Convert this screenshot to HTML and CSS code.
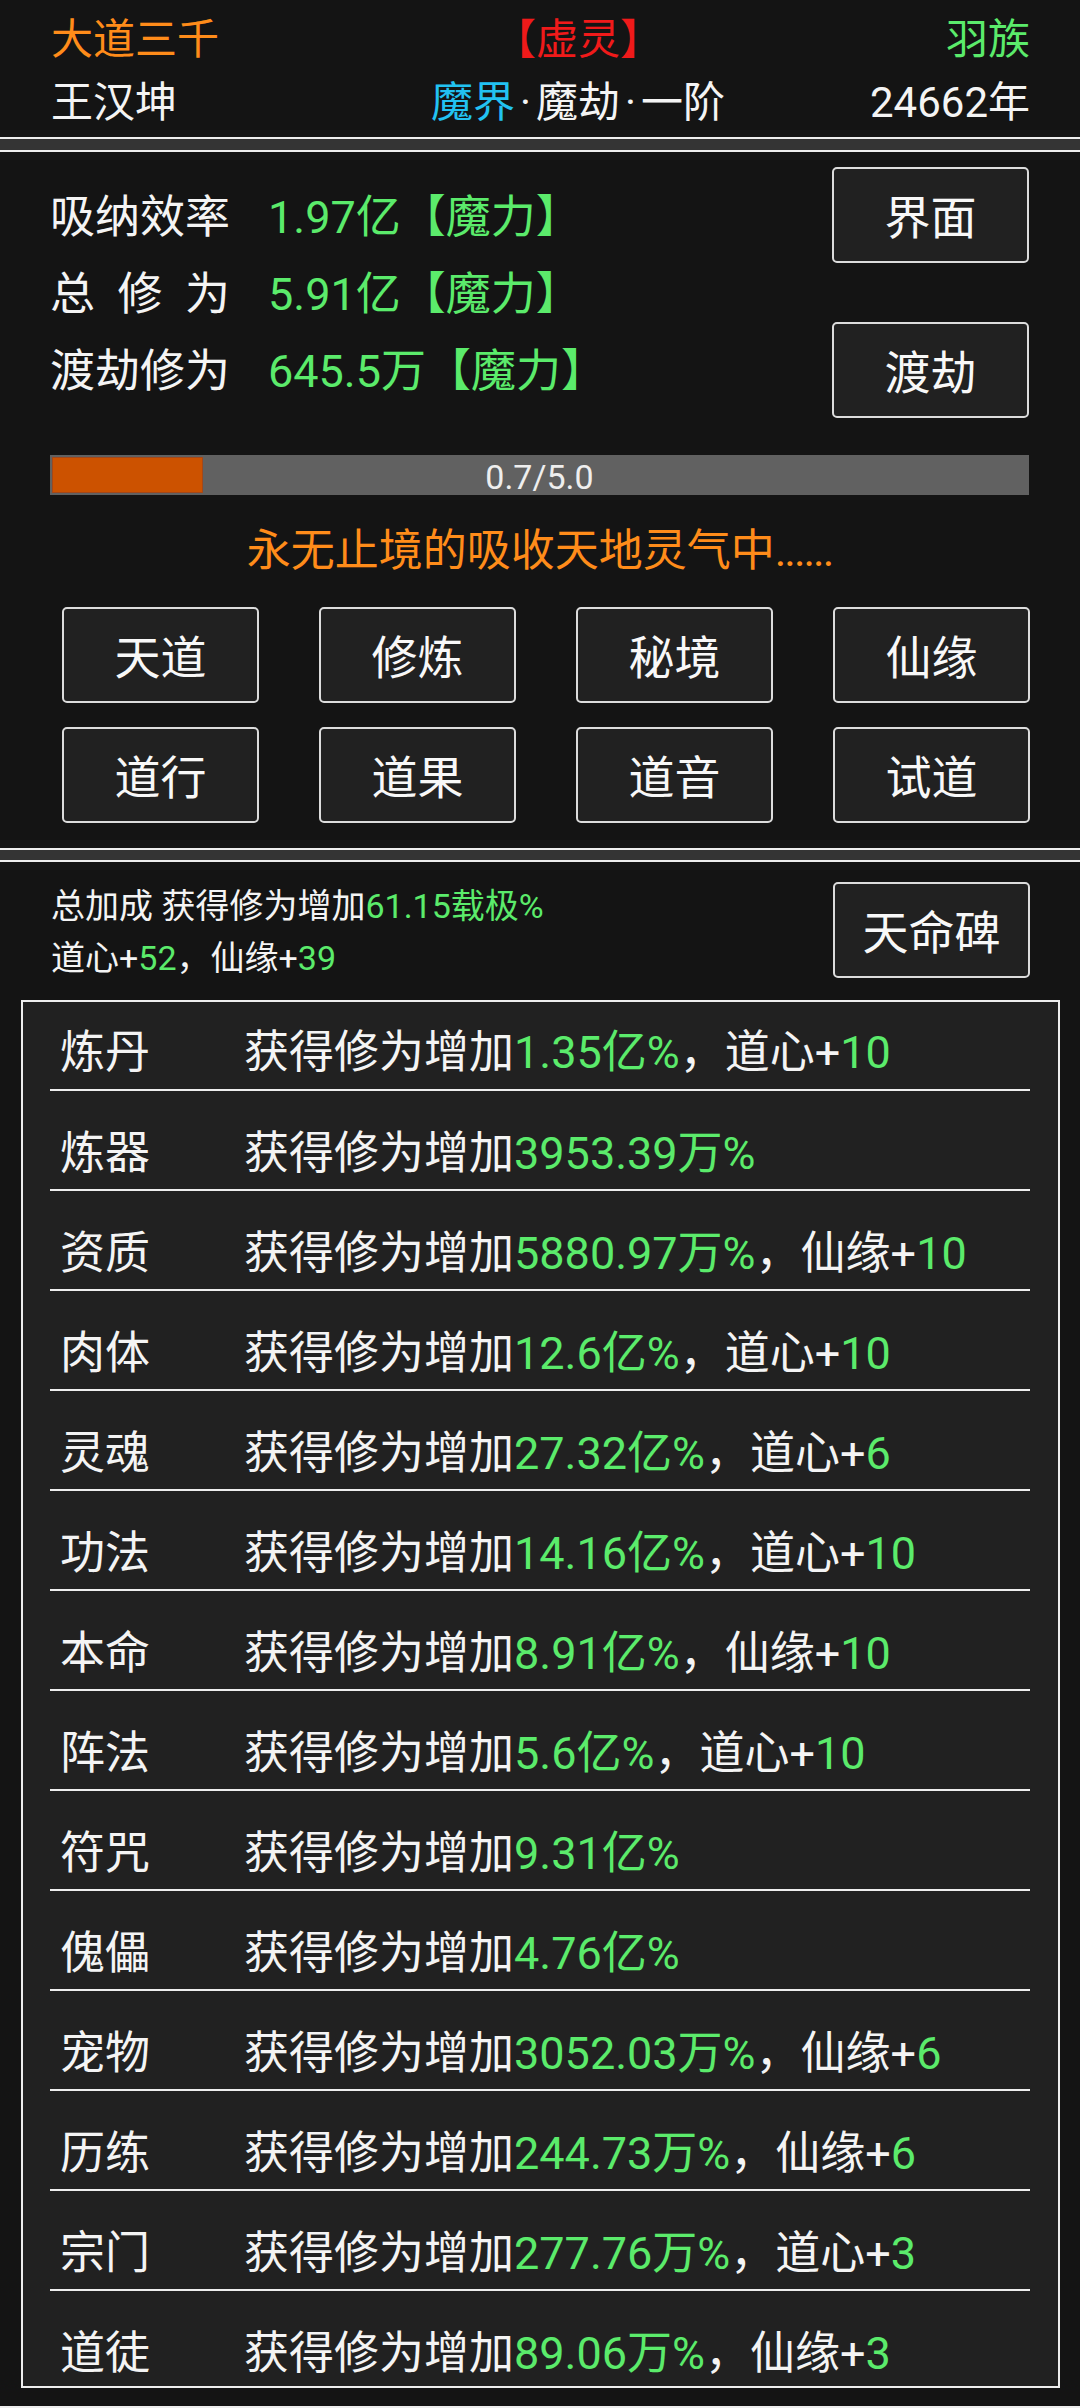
FILE: index.html
```html
<!DOCTYPE html>
<html lang="zh-CN">
<head>
<meta charset="utf-8">
<title>修为</title>
<link rel="stylesheet" href="styles.css">
</head>
<body>
<div class="page">
  <section class="panel header">
    <div class="hrow">
      <span class="c-orange">大道三千</span>
      <span class="mid c-red">【虚灵】</span>
      <span class="right c-green">羽族</span>
    </div>
    <div class="hrow">
      <span>王汉坤</span>
      <span class="mid"><span class="c-cyan">魔界</span><span class="dot">·</span>魔劫<span class="dot">·</span>一阶</span>
      <span class="right">24662年</span>
    </div>
  </section>

  <section class="panel main">
    <div class="top">
      <div class="stats">
        <div class="stat"><span class="lbl">吸纳效率</span><span class="val">1.97亿【魔力】</span></div>
        <div class="stat"><span class="lbl spread"><i>总</i><i>修</i><i>为</i></span><span class="val">5.91亿【魔力】</span></div>
        <div class="stat"><span class="lbl">渡劫修为</span><span class="val">645.5万【魔力】</span></div>
      </div>
      <div class="side">
        <div class="btn">界面</div>
        <div class="btn">渡劫</div>
      </div>
    </div>
    <div class="bar">
      <div class="fill"></div>
      <div class="bar-label">0.7/5.0</div>
    </div>
    <div class="msg">永无止境的吸收天地灵气中<span class="dots">......</span></div>
    <div class="grid">
      <div class="btn">天道</div>
      <div class="btn">修炼</div>
      <div class="btn">秘境</div>
      <div class="btn">仙缘</div>
      <div class="btn">道行</div>
      <div class="btn">道果</div>
      <div class="btn">道音</div>
      <div class="btn">试道</div>
    </div>
  </section>

  <section class="panel bonus">
    <div class="btop">
      <div class="summary">
        <div>总加成 获得修为增加<span class="c-green">61.15载极%</span></div>
        <div>道心+<span class="c-green">52</span>，仙缘+<span class="c-green">39</span></div>
      </div>
      <div class="btn">天命碑</div>
    </div>
    <div class="list">
      <div class="row"><span class="name">炼丹</span><span class="desc">获得修为增加<span class="c-green">1.35亿%</span>，道心+<span class="c-green">10</span></span></div>
      <div class="row"><span class="name">炼器</span><span class="desc">获得修为增加<span class="c-green">3953.39万%</span></span></div>
      <div class="row"><span class="name">资质</span><span class="desc">获得修为增加<span class="c-green">5880.97万%</span>，仙缘+<span class="c-green">10</span></span></div>
      <div class="row"><span class="name">肉体</span><span class="desc">获得修为增加<span class="c-green">12.6亿%</span>，道心+<span class="c-green">10</span></span></div>
      <div class="row"><span class="name">灵魂</span><span class="desc">获得修为增加<span class="c-green">27.32亿%</span>，道心+<span class="c-green">6</span></span></div>
      <div class="row"><span class="name">功法</span><span class="desc">获得修为增加<span class="c-green">14.16亿%</span>，道心+<span class="c-green">10</span></span></div>
      <div class="row"><span class="name">本命</span><span class="desc">获得修为增加<span class="c-green">8.91亿%</span>，仙缘+<span class="c-green">10</span></span></div>
      <div class="row"><span class="name">阵法</span><span class="desc">获得修为增加<span class="c-green">5.6亿%</span>，道心+<span class="c-green">10</span></span></div>
      <div class="row"><span class="name">符咒</span><span class="desc">获得修为增加<span class="c-green">9.31亿%</span></span></div>
      <div class="row"><span class="name">傀儡</span><span class="desc">获得修为增加<span class="c-green">4.76亿%</span></span></div>
      <div class="row"><span class="name">宠物</span><span class="desc">获得修为增加<span class="c-green">3052.03万%</span>，仙缘+<span class="c-green">6</span></span></div>
      <div class="row"><span class="name">历练</span><span class="desc">获得修为增加<span class="c-green">244.73万%</span>，仙缘+<span class="c-green">6</span></span></div>
      <div class="row"><span class="name">宗门</span><span class="desc">获得修为增加<span class="c-green">277.76万%</span>，道心+<span class="c-green">3</span></span></div>
      <div class="row"><span class="name">道徒</span><span class="desc">获得修为增加<span class="c-green">89.06万%</span>，仙缘+<span class="c-green">3</span></span></div>
    </div>
  </section>
</div>
</body>
</html>
```

FILE: styles.css
```css
* { box-sizing: border-box; }
html, body {
  margin: 0;
  padding: 0;
  background: #343434;
}
body {
  width: 1080px;
  height: 2408px;
  overflow: hidden;
  font-family: Roboto, "Noto Sans CJK SC", sans-serif;
  color: #f4f4f4;
}
.page {
  display: flex;
  flex-direction: column;
}
.panel {
  background: #141414;
}
.c-green { color: #5beb6b; }
.c-orange { color: #ff8c1a; }
.c-red { color: #f01a1a; }
.c-cyan { color: #22c2f2; }

/* header */
.header {
  height: 139px;
  padding: 8px 50px 0 51px;
  border-bottom: 2px solid #eeeeee;
  font-size: 42px;
}
.hrow {
  display: grid;
  grid-template-columns: 377px 300px 1fr;
  line-height: 63px;
  white-space: nowrap;
}
.hrow .mid { text-align: center; }
.hrow .right { text-align: right; }
.dot {
  padding: 0 5px;
}

/* main panel */
.main {
  margin-top: 11px;
  height: 700px;
  padding: 15px 51px 0 50px;
  border-top: 2px solid #eeeeee;
  border-bottom: 2px solid #eeeeee;
}
.top {
  display: flex;
  justify-content: space-between;
  align-items: flex-start;
  height: 251px;
}
.stats {
  margin-top: 12px;
  font-size: 45px;
}
.stat {
  display: flex;
  line-height: 77px;
  white-space: nowrap;
}
.lbl {
  width: 180px;
}
.spread {
  display: flex;
  justify-content: space-between;
}
.spread i { font-style: normal; }
.val {
  margin-left: 38px;
  color: #5beb6b;
}
.side {
  display: flex;
  flex-direction: column;
  gap: 59px;
}
.btn {
  width: 197px;
  height: 96px;
  border: 2px solid #dcdcdc;
  border-radius: 5px;
  background: #212121;
  display: flex;
  align-items: center;
  justify-content: center;
  font-size: 46px;
  color: #f8f8f8;
  padding-bottom: 2px;
}
.bar {
  position: relative;
  margin-top: 37px;
  height: 40px;
  background: #616161;
  padding: 2px;
}
.fill {
  width: 151px;
  height: 36px;
  background: #cc5200;
  box-shadow: inset 0 0 0 1px #a3481a;
}
.bar-label {
  position: absolute;
  left: 0;
  right: 0;
  top: 2px;
  line-height: 40px;
  text-align: center;
  font-size: 34px;
  color: #eeeeee;
}
.msg {
  margin-top: 26px;
  line-height: 60px;
  text-align: center;
  font-size: 44px;
  color: #ff8c1a;
}
.dots {
  letter-spacing: -2px;
}
.grid {
  margin-top: 26px;
  margin-left: 12px;
  display: grid;
  grid-template-columns: repeat(4, 197px);
  column-gap: 60px;
  row-gap: 24px;
}

/* bonus panel */
.bonus {
  margin-top: 10px;
  height: 1548px;
  padding: 18px 20px 0 21px;
  border-top: 2px solid #eeeeee;
  border-bottom: 2px solid #eeeeee;
}
.btop {
  display: flex;
  justify-content: space-between;
  align-items: flex-start;
  padding: 0 30px 0 30px;
  height: 104px;
}
.summary {
  font-size: 34px;
  line-height: 52px;
  white-space: nowrap;
}
.btop .btn {
  margin-top: 2px;
}
.list {
  margin-top: 16px;
  border: 2px solid #eeeeee;
  background: #212121;
  padding: 0 28px 0 27px;
}
.row {
  display: flex;
  height: 100px;
  padding-top: 40px;
  border-bottom: 2px solid #eeeeee;
  font-size: 45px;
  line-height: 45px;
  white-space: nowrap;
}
.row:first-child {
  height: 89px;
  padding-top: 28px;
}
.row:last-child {
  height: 95px;
  border-bottom: none;
}
.name {
  width: 194px;
  padding-left: 10px;
}
```
